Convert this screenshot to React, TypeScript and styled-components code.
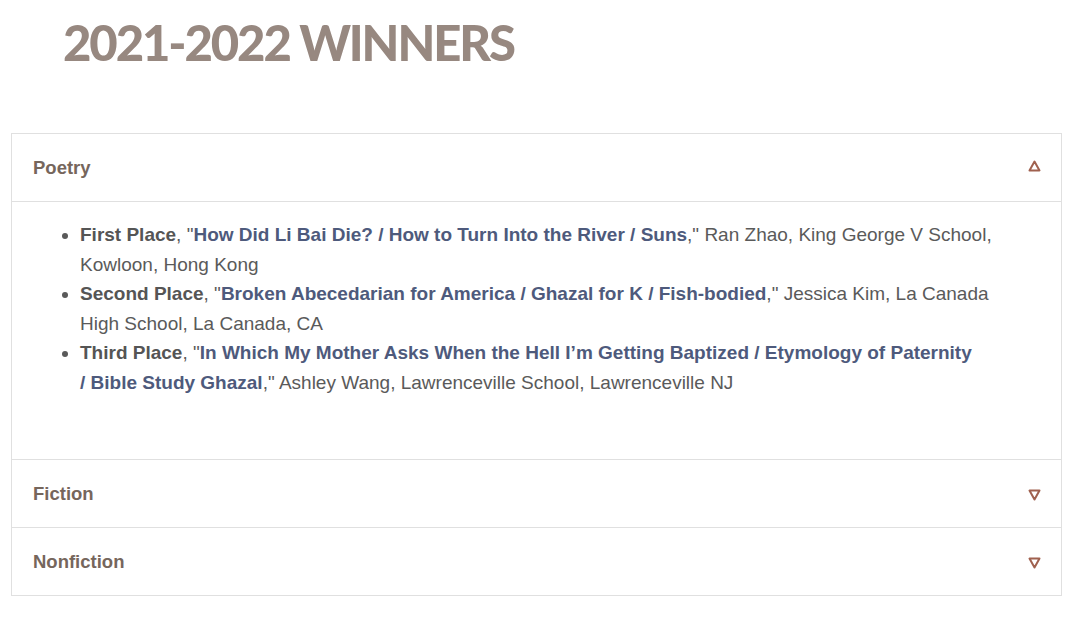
import React from "react";
import styled, { createGlobalStyle } from "styled-components";

const Global = createGlobalStyle`
  html, body { margin: 0; padding: 0; background: #fff; }
  body { font-family: "Liberation Sans", Arial, sans-serif; }
`;

const Page = styled.div`
  width: 1080px;
  padding: 0 18px 0 11px;
  box-sizing: border-box;
`;

const Title = styled.h1`
  margin: 0;
  padding: 13px 0 0 52px;
  height: 133px;
  box-sizing: border-box;
  font-family: "Lato", sans-serif;
  font-weight: 900;
  font-size: 49px;
  letter-spacing: -2.1px;
  color: #978880;
`;

const Accordion = styled.div`
  border: 1px solid #e0e0e0;
`;

const Section = styled.div<{ $last?: boolean }>`
  border-bottom: ${(p) => (p.$last ? "none" : "1px solid #e0e0e0")};
`;

const Header = styled.div<{ $open?: boolean }>`
  height: 67px;
  display: flex;
  align-items: center;
  justify-content: space-between;
  padding: 0 20px 0 21px;
  border-bottom: ${(p) => (p.$open ? "1px solid #e0e0e0" : "none")};
  font-size: 18.5px;
  font-weight: bold;
  color: #76665c;
`;

const Body = styled.div`
  height: 257px;
  box-sizing: border-box;
  padding: 18px 30px 0 68px;
`;

const List = styled.ul`
  margin: 0;
  padding: 0;
  max-width: 944px;
  list-style: disc;
  color: #5a5a5a;
  font-size: 19px;
  line-height: 29.5px;
`;

const Item = styled.li`
  list-style-position: outside;
`;

const Label = styled.b`
  color: #555;
`;

const Link = styled.a`
  color: #4e5a7c;
  font-weight: bold;
  text-decoration: none;
`;

const Tri = ({ up }: { up?: boolean }) => (
  <svg width="13" height="12" viewBox="0 0 13 12" style={{ marginTop: up ? -3 : 2 }}>
    <polygon
      points={up ? "6.5,1.5 11.5,10.5 1.5,10.5" : "1.5,1.5 11.5,1.5 6.5,10.5"}
      fill="none"
      stroke="#a0614f"
      strokeWidth="2"
      strokeLinejoin="round"
    />
  </svg>
);

export default function App() {
  return (
    <Page>
      <Global />
      <Title>2021-2022 WINNERS</Title>
      <Accordion>
        <Section>
          <Header $open>
            <span>Poetry</span>
            <Tri up />
          </Header>
          <Body>
            <List>
              <Item>
                <Label>First Place</Label>, "<Link>How Did Li Bai Die? / How to Turn Into the River / Suns</Link>," Ran Zhao, King George V School, Kowloon, Hong Kong
              </Item>
              <Item>
                <Label>Second Place</Label>, "<Link>Broken Abecedarian for America / Ghazal for K / Fish-bodied</Link>," Jessica Kim, La Canada High School, La Canada, CA
              </Item>
              <Item>
                <Label>Third Place</Label>, "<Link>In Which My Mother Asks When the Hell I’m Getting Baptized / Etymology of Paternity<br />/ Bible Study Ghazal</Link>," Ashley Wang, Lawrenceville School, Lawrenceville NJ
              </Item>
            </List>
          </Body>
        </Section>
        <Section>
          <Header>
            <span>Fiction</span>
            <Tri />
          </Header>
        </Section>
        <Section $last>
          <Header>
            <span>Nonfiction</span>
            <Tri />
          </Header>
        </Section>
      </Accordion>
    </Page>
  );
}
